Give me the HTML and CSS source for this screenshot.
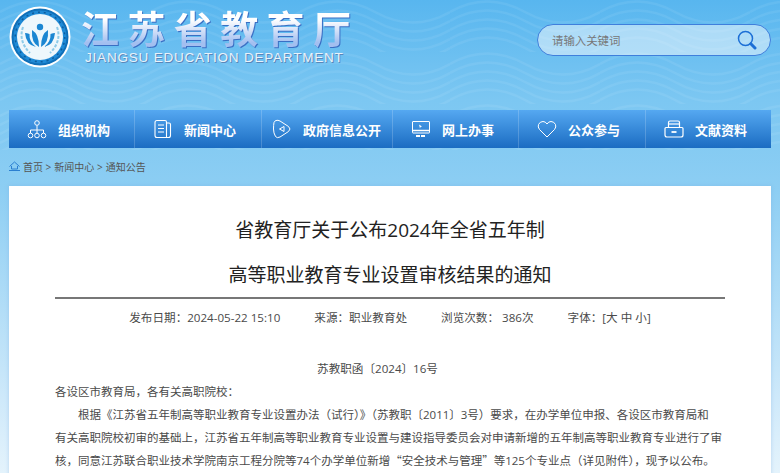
FILE: index.html
```html
<!DOCTYPE html>
<html lang="zh-CN">
<head>
    <meta charset="UTF-8">
    <title>省教育厅关于公布2024年全省五年制高等职业教育专业设置审核结果的通知</title>
    <link rel="stylesheet" href="styles.css">
</head>
<body>
    <svg class="waves" width="780" height="150" aria-hidden="true">
        <defs>
            <pattern id="wave" width="150" height="52" patternUnits="userSpaceOnUse">
                <g fill="none" stroke="#fff" stroke-opacity="0.065" stroke-width="2.5">
                    <path d="M0 12 Q37 -9 75 12 T150 12"/>
                    <path d="M0 21 Q37 0 75 21 T150 21"/>
                    <path d="M0 30 Q37 9 75 30 T150 30"/>
                    <path d="M0 39 Q37 18 75 39 T150 39"/>
                    <path d="M0 48 Q37 27 75 48 T150 48"/>
                </g>
            </pattern>
        </defs>
        <rect width="780" height="150" fill="url(#wave)"/>
    </svg>

    <header class="header">
        <svg class="logo" width="62" height="62" viewBox="0 0 62 62">
            <circle cx="31" cy="31" r="30.5" fill="#fff"/>
            <circle cx="31" cy="31" r="28.5" fill="#0f6fb8"/>
            <circle cx="31" cy="31" r="26.5" fill="#1f8ad6"/>
            <circle cx="31" cy="31" r="24.8" fill="none" stroke="#0f5c9c" stroke-width="1.5" stroke-dasharray="2 4"/>
            <circle cx="31" cy="31" r="23" fill="#eef7fc"/>
            <g fill="none" stroke="#8fcbe8" stroke-width="2" stroke-dasharray="3 1.5">
                <path d="M14 21 Q9 35 21 47"/>
                <path d="M48 21 Q53 35 41 47"/>
            </g>
            <circle cx="31" cy="21" r="3.2" fill="#1b86d2"/>
            <g fill="#1b86d2">
                <path d="M30 41 Q22 37 23 24 Q30 28 30 41Z"/>
                <path d="M27 41 Q17 39 16 27 Q18 27 20.5 28 Q20 36 27 41Z"/>
            </g>
            <g fill="#1b86d2" transform="matrix(-1 0 0 1 62 0)">
                <path d="M30 41 Q22 37 23 24 Q30 28 30 41Z"/>
                <path d="M27 41 Q17 39 16 27 Q18 27 20.5 28 Q20 36 27 41Z"/>
            </g>
        </svg>
        <div class="brand">
            <div class="brand-cn">江苏省教育厅</div>
            <div class="brand-en">JIANGSU EDUCATION DEPARTMENT</div>
        </div>
        <div class="search">
            <span class="search-text">请输入关键词</span>
            <svg width="20" height="20" viewBox="0 0 20 20">
                <circle cx="8.5" cy="8.5" r="7" fill="none" stroke="#1c6fd6" stroke-width="1.5"/>
                <path d="M13.8 13.8 L18 18" stroke="#1c6fd6" stroke-width="3" stroke-linecap="round"/>
            </svg>
        </div>
    </header>

    <nav class="nav">
        <a class="nav-item">
            <svg width="20" height="20" viewBox="0 0 20 20" fill="none" stroke="#fff" stroke-width="1">
                <circle cx="10" cy="4" r="2.3"/>
                <path d="M10 6.5 V11 M3.5 14 V11 H16.5 V14 M10 11 V14"/>
                <circle cx="3.5" cy="16.5" r="2.3"/>
                <circle cx="10" cy="16.5" r="2.3"/>
                <circle cx="16.5" cy="16.5" r="2.3"/>
            </svg>
            <span>组织机构</span>
        </a>
        <a class="nav-item">
            <svg width="20" height="20" viewBox="0 0 20 20" fill="none" stroke="#fff" stroke-width="1.1">
                <path d="M4 1.5 H12 Q13.5 1.5 13.5 3 V18.5 H4 Q2 18.5 2 16.5 V3.5 Q2 1.5 4 1.5Z"/>
                <path d="M13.5 4 H16 Q17.5 4 17.5 5.5 V16.5 Q17.5 18.5 15.5 18.5 H13.5"/>
                <path d="M5 6 H11 M5 9.5 H11 M5 13 H11"/>
            </svg>
            <span>新闻中心</span>
        </a>
        <a class="nav-item nav-item-wide">
            <svg width="20" height="20" viewBox="0 0 20 20" fill="none" stroke="#fff" stroke-width="1">
                <path d="M4 1.5 Q6 0.8 8 2 L16.5 7.5 Q19.5 10 16.5 12.5 L8 18 Q5 19.5 3.5 17.5 Q1.5 14 1.5 10 Q1.5 6 2 3.5 Q2.5 2 4 1.5Z"/>
                <path d="M12 7.5 V12.5 L7.5 10Z"/>
            </svg>
            <span>政府信息公开</span>
        </a>
        <a class="nav-item">
            <svg width="20" height="20" viewBox="0 0 20 20" fill="none" stroke="#fff" stroke-width="1">
                <rect x="1.5" y="2.5" width="17" height="11.5" rx="0.5"/>
                <path d="M2 11.5 H18" stroke-width="1.5"/>
                <path d="M8 5.5 L11 7.5 L9.5 8 L9 9.5Z" fill="#fff" stroke="none"/>
                <path d="M5 17 H15" stroke-width="2" stroke-dasharray="4 1"/>
            </svg>
            <span>网上办事</span>
        </a>
        <a class="nav-item">
            <svg width="20" height="20" viewBox="0 0 20 20" fill="none" stroke="#fff" stroke-width="1">
                <path d="M10 18 L2.5 10.5 Q0.5 8 1.5 5.5 Q3 2.5 6 2.5 Q8.5 2.5 10 5 Q11.5 2.5 14 2.5 Q17 2.5 18.5 5.5 Q19.5 8 17.5 10.5Z"/>
            </svg>
            <span>公众参与</span>
        </a>
        <a class="nav-item">
            <svg width="20" height="20" viewBox="0 0 20 20" fill="none" stroke="#fff" stroke-width="1.2">
                <path d="M4.5 8 V3.5 Q4.5 2 6 2 H14 Q15.5 2 15.5 3.5 V8"/>
                <path d="M5 5 H15"/>
                <path d="M2 8.5 H18 Q19 8.5 19 9.5 V16 Q19 18 17 18 H3 Q1 18 1 16 V9.5 Q1 8.5 2 8.5Z"/>
                <path d="M7.5 13 H12.5" stroke-width="1.8"/>
            </svg>
            <span>文献资料</span>
        </a>
    </nav>

    <div class="crumbs">
        <svg width="11" height="10" viewBox="0 0 11 10" fill="none" stroke="#2b7fd0" stroke-width="1">
            <path d="M0.5 5.5 L5.5 1 L10.5 5.5 M2.5 5 V8 H8.5 V5"/>
            <path d="M0 9.5 H11"/>
        </svg>
        <span>首页 &gt;</span>
        <span>新闻中心 &gt;</span>
        <span>通知公告</span>
    </div>

    <main class="card">
        <h1 class="title">省教育厅关于公布2024年全省五年制<br>高等职业教育专业设置审核结果的通知</h1>
        <div class="meta">
            <span>发布日期：2024-05-22 15:10</span>
            <span>来源：职业教育处</span>
            <span>浏览次数： 386次</span>
            <span>字体：[大 中 小]</span>
        </div>
        <p class="doc-no">苏教职函〔2024〕16号</p>
        <p class="line">各设区市教育局，各有关高职院校：</p>
        <p class="line indent">根据《江苏省五年制高等职业教育专业设置办法（试行）》（苏教职〔2011〕3号）要求，在办学单位申报、各设区市教育局和<br>有关高职院校初审的基础上，江苏省五年制高等职业教育专业设置与建设指导委员会对申请新增的五年制高等职业教育专业进行了审<br>核，同意江苏联合职业技术学院南京工程分院等74个办学单位新增<span class="quote">“</span>安全技术与管理<span class="quote">”</span>等125个专业点（详见附件），现予以公布。</p>
    </main>
</body>
</html>
```

FILE: styles.css
```css
html, body {
    height: 473px;
    overflow: hidden;
}
body {
    position: relative;
    margin: 0;
    font-family: "Open Sans", "Noto Sans CJK SC", sans-serif;
    background: linear-gradient(to bottom, #58b6ef 0, #7cc7f2 100px, #8dcef3 190px, #cfe9fa 400px, #e4f3fc 473px);
}
.waves {
    position: absolute;
    top: 0;
    left: 0;
}
.header {
    position: relative;
    display: flex;
    align-items: flex-start;
    height: 110px;
}
.logo {
    margin: 6px 0 0 9px;
}
.brand {
    margin: 7px 0 0 10px;
}
.brand-cn {
    font-size: 38px;
    line-height: 42px;
    font-weight: 700;
    letter-spacing: 8.4px;
    background: linear-gradient(to bottom, #ffffff 30%, #a3bff0 85%);
    -webkit-background-clip: text;
    background-clip: text;
    color: transparent;
    filter: drop-shadow(1px 1px 0 #3a6fc4);
}
.brand-en {
    margin: 1px 0 0 4px;
    font-family: "Liberation Sans", sans-serif;
    font-size: 13.5px;
    line-height: 16px;
    letter-spacing: 0.8px;
    color: #e8f2fb;
    text-shadow: 1px 1px 0 #5a86b8;
}
.search {
    display: flex;
    align-items: center;
    justify-content: space-between;
    box-sizing: border-box;
    width: 234px;
    height: 32px;
    margin: 24px 9px 0 auto;
    padding: 0 13px 0 14px;
    border: 1px solid #3f7fdc;
    border-radius: 16px;
    background: rgba(255, 255, 255, 0.48);
}
.search-text {
    font-size: 11.4px;
    color: #777;
}
.nav {
    position: relative;
    display: grid;
    grid-template-columns: 126px 127px 131px 126px 127px 125px;
    height: 38px;
    margin: 0 9px;
    background: linear-gradient(to bottom, #55a8f1, #1b6cc2);
}
.nav-item {
    display: flex;
    align-items: center;
    gap: 11px;
    box-sizing: border-box;
    padding-left: 18px;
    border-right: 1px solid rgba(255, 255, 255, 0.18);
    font-size: 13px;
    font-weight: 700;
    color: #fff;
}
.nav-item:last-child {
    border-right: 0;
}
.nav-item-wide {
    padding-left: 10px;
}
.crumbs {
    position: relative;
    display: flex;
    align-items: center;
    gap: 3px;
    box-sizing: border-box;
    height: 38px;
    padding: 0 0 2px 9px;
    font-size: 10px;
    color: #555;
}
.card {
    position: relative;
    height: 287px;
    margin: 0 9px;
    padding: 22px 46px 0;
    background: #fff;
    box-shadow: 0 0 4px rgba(120, 170, 220, 0.4);
    color: #4a4a4a;
}
.title {
    margin: 0;
    border-bottom: 2px solid #777;
    font-size: 19px;
    line-height: 44.5px;
    font-weight: 400;
    text-align: center;
    color: #222;
}
.meta {
    display: flex;
    justify-content: center;
    gap: 34px;
    margin-top: 9px;
    font-size: 11.6px;
    line-height: 20px;
}
.doc-no {
    margin: 31px 25px 0 0;
    font-size: 11.6px;
    line-height: 20px;
    text-align: center;
}
.line {
    margin: 1px 0 0;
    font-size: 11.5px;
    line-height: 23px;
    white-space: nowrap;
}
.indent {
    margin-top: 0;
    text-indent: 2em;
}
.quote {
    font-family: "Noto Sans CJK SC", sans-serif;
}
```
